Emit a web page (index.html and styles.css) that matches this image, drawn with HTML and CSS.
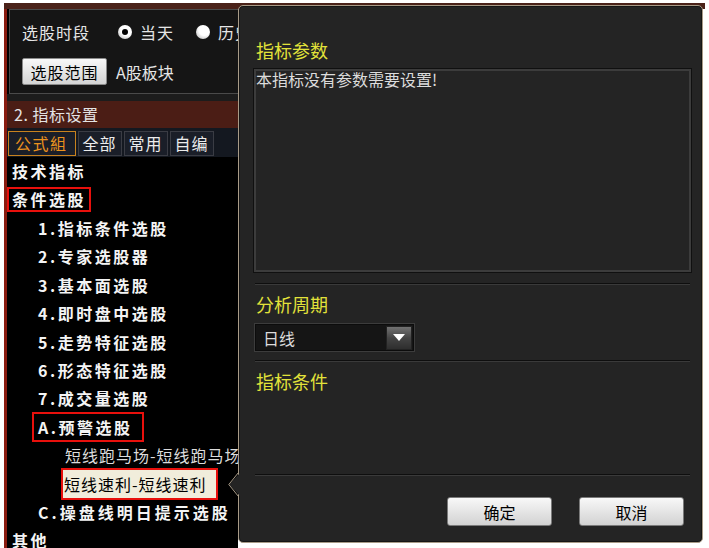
FILE: index.html
```html
<!DOCTYPE html>
<html lang="zh-CN">
<head>
<meta charset="utf-8">
<title>选股</title>
<link rel="stylesheet" href="styles.css">
</head>
<body>
<div class="frame">
  <div class="left">
    <div class="top-box">
      <div class="row1">
        <span class="lbl">选股时段</span>
        <span class="radio on"></span><span class="lbl">当天</span>
        <span class="radio r2"></span><span class="lbl">历史时段</span>
      </div>
      <div class="row2">
        <button class="btn-range">选股范围</button>
        <span class="scope">A股板块</span>
      </div>
    </div>
    <div class="gap"></div>
    <div class="sec-head">2. 指标设置</div>
    <div class="tabs">
      <span class="tab sel">公式組</span>
      <span class="tab">全部</span>
      <span class="tab">常用</span>
      <span class="tab">自编</span>
    </div>
    <ul class="tree">
      <li class="l0"><span>技术指标</span></li>
      <li class="l0"><span class="box">条件选股</span></li>
      <li class="l1"><span>1.指标条件选股</span></li>
      <li class="l1"><span>2.专家选股器</span></li>
      <li class="l1"><span>3.基本面选股</span></li>
      <li class="l1"><span>4.即时盘中选股</span></li>
      <li class="l1"><span>5.走势特征选股</span></li>
      <li class="l1"><span>6.形态特征选股</span></li>
      <li class="l1"><span>7.成交量选股</span></li>
      <li class="l1"><span class="box">A.预警选股</span></li>
      <li class="l2"><span>短线跑马场-短线跑马场</span></li>
      <li class="l2"><span class="box hl">短线速利-短线速利</span></li>
      <li class="l1 wide"><span>C.操盘线明日提示选股</span></li>
      <li class="l0"><span>其他</span></li>
    </ul>
  </div>
  <div class="popup">
    <svg class="arrow" width="13" height="26" viewBox="0 0 13 26">
      <polygon points="13,0 1,12.5 13,25" fill="#242424"/>
      <polyline points="10.5,0.5 0.8,12.5 10.5,24.5" fill="none" stroke="#a89b88" stroke-width="1"/>
    </svg>
    <div class="ptitle t1">指标参数</div>
    <div class="param-box">本指标没有参数需要设置!</div>
    <div class="sep s1"></div>
    <div class="ptitle t2">分析周期</div>
    <div class="select"><span>日线</span><span class="dd"><span class="tri"></span></span></div>
    <div class="sep s2"></div>
    <div class="ptitle t2">指标条件</div>
    <div class="sep s3"></div>
    <div class="actions">
      <button class="btn">确定</button>
      <button class="btn">取消</button>
    </div>
  </div>
</div>
</body>
</html>
```
FILE: styles.css
```css
* { box-sizing: border-box; }
body {
  margin: 0;
  background: #fff;
  font-family: "Noto Sans CJK SC", "Noto Sans", sans-serif;
  font-size: 16px;
}
.frame {
  position: relative;
  margin: 3px 0 0 4px;
  width: 701px;
  height: 545px;
  border-top: 6px solid #4a2219;
}
.left {
  width: 234px;
  height: 539px;
  background: #000;
  border-left: 3px solid #8a1c10;
  overflow: hidden;
  display: flex;
  flex-direction: column;
}
.top-box {
  margin-left: 2px;
  border: 1px solid #4a4a4a;
  border-right: none;
  background: #151515;
  padding: 10px 0 8px 12px;
  color: #e6e6e6;
  white-space: nowrap;
}
.row1 { display: flex; align-items: center; height: 24px; }
.lbl { letter-spacing: 1px; }
.radio {
  position: relative;
  flex: none;
  width: 14px;
  height: 14px;
  border-radius: 50%;
  background: radial-gradient(circle at 60% 35%, #fff 45%, #c8c8c8 80%, #9a9a9a);
  margin: 0 8px 0 28px;
}
.radio.r2 { margin-left: 22px; }
.radio.on::after {
  content: "";
  position: absolute;
  left: 4px; top: 4px;
  width: 6px; height: 6px;
  border-radius: 50%;
  background: #000;
}
.row2 { display: flex; align-items: center; margin-top: 14px; }
.btn-range {
  width: 85px;
  height: 27px;
  padding: 0;
  font: inherit;
  letter-spacing: 1px;
  color: #000;
  background: linear-gradient(#f8f8f8, #d4d4d4);
  border: 1px solid #8a8a8a;
  border-radius: 2px;
}
.scope { margin-left: 9px; }
.gap { height: 7px; background: #1c1c1c; flex: none; }
.sec-head {
  flex: none;
  height: 27px;
  line-height: 27px;
  background: #4b1d15;
  color: #e4e4e4;
  padding-left: 7px;
  letter-spacing: 0.5px;
}
.tabs {
  flex: none;
  height: 29px;
  background: #141820;
  display: flex;
  gap: 2px;
  padding: 3px 0 1px 1px;
}
.tab {
  border: 1px solid #3a3c44;
  background: #1a1e28;
  color: #ececec;
  padding: 0 4px;
  line-height: 23px;
  letter-spacing: 1px;
}
.tab.sel { border-color: #c8821e; color: #ea921e; padding: 0 7px 0 6px; letter-spacing: 1.5px; }
.tree { list-style: none; margin: 0; padding: 0; }
.tree li {
  height: 28.4px;
  display: flex;
  align-items: center;
  white-space: nowrap;
  color: #f4f4f4;
  font-weight: 700;
  letter-spacing: 2.5px;
}
.tree .l0 { padding-left: 5px; }
.tree .l1 { padding-left: 31px; }
.tree .l1.wide { letter-spacing: 3px; }
.tree .l2 { padding-left: 58px; font-weight: 400; letter-spacing: 1px; color: #dcdcdc; }
.box { border: 2px solid #e8100c; }
.l0 .box { height: 25px; line-height: 21px; padding: 0 3px 0 3px; margin-left: -5px; }
.l1 .box { height: 30px; line-height: 26px; padding: 0 10px 0 4px; margin-left: -6px; }
.l2 .box.hl {
  height: 32px;
  line-height: 28px;
  padding: 0 9px 0 1px;
  margin-left: -4px;
  background: #f1eddb;
  color: #000;
}
.popup {
  position: absolute;
  left: 234px;
  top: -4px;
  width: 465px;
  height: 538px;
  background: #242424;
  border: 1px solid #a89b88;
  border-radius: 5px;
  box-shadow: inset 0 0 0 1px #161616;
  padding: 0 10px 0 14px;
  display: flex;
  flex-direction: column;
}
.arrow { position: absolute; left: -11px; top: 466px; }
.ptitle {
  color: #e2e23a;
  font-size: 18px;
  line-height: 24px;
  margin-left: 3px;
}
.t1 { margin-top: 32px; }
.t2 { margin-top: 7px; }
.param-box {
  margin-top: 6px;
  height: 205px;
  border: 1px solid #101010;
  box-shadow: inset 0 0 0 2px #3c3c3c;
  color: #dcdcdc;
  padding: 0 2px;
  line-height: 20px;
}
.sep {
  margin: 0 2px;
  height: 2px;
  border-top: 1px solid #0e0e0e;
  border-bottom: 1px solid #3a3a3a;
}
.s1 { margin-top: 10px; }
.s2 { margin-top: 8px; }
.s3 { margin-top: 81px; }
.select {
  margin: 7px 0 0 1px;
  width: 161px;
  height: 29px;
  display: flex;
  align-items: center;
  justify-content: space-between;
  background: #151515;
  border: 1px solid #3c3c3c;
  box-shadow: inset 0 0 0 1px #0c0c0c;
  padding: 0 2px 0 8px;
  color: #dcdcdc;
}
.dd {
  width: 26px;
  height: 24px;
  background: linear-gradient(#727272, #444 50%, #2e2e2e);
  border: 1px solid #222;
  display: flex;
  align-items: center;
  justify-content: center;
}
.tri {
  width: 0;
  height: 0;
  border-left: 6px solid transparent;
  border-right: 6px solid transparent;
  border-top: 7px solid #fff;
}
.actions {
  display: flex;
  justify-content: flex-end;
  gap: 27px;
  margin-top: 21px;
  padding-right: 8px;
}
.btn {
  width: 105px;
  height: 29px;
  padding: 0;
  font: inherit;
  color: #000;
  background: linear-gradient(#f8f8f8, #d2d2d2);
  border: 1px solid #7a7a7a;
  border-radius: 3px;
}
```
